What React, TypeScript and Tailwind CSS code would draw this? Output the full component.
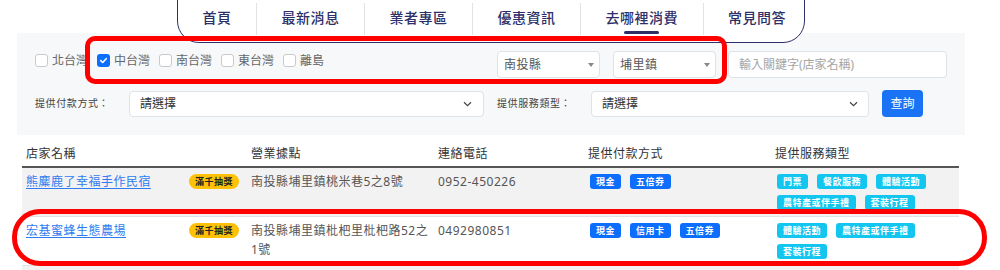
import { ReactNode } from "react";

const navItems = ["首頁", "最新消息", "業者專區", "優惠資訊", "去哪裡消費", "常見問答"];
const activeNav = "去哪裡消費";

const regions = [
  { label: "北台灣", checked: false },
  { label: "中台灣", checked: true },
  { label: "南台灣", checked: false },
  { label: "東台灣", checked: false },
  { label: "離島", checked: false },
];

const stores = [
  {
    name: "熊麋鹿了幸福手作民宿",
    addr: "南投縣埔里鎮桃米巷5之8號",
    phone: "0952-450226",
    pay: ["現金", "五倍券"],
    svc: ["門票", "餐飲服務", "體驗活動", "農特產或伴手禮", "套裝行程"],
  },
  {
    name: "宏基蜜蜂生態農場",
    addr: "南投縣埔里鎮枇杷里枇杷路52之1號",
    phone: "0492980851",
    pay: ["現金", "信用卡", "五倍券"],
    svc: ["體驗活動", "農特產或伴手禮", "套裝行程"],
  },
];

function Checkbox({ checked }: { checked: boolean }) {
  if (checked) {
    return (
      <span className="w-[13px] h-[13px] rounded-[3px] bg-[#0d6efd] flex items-center justify-center">
        <svg width="9" height="9" viewBox="0 0 10 10">
          <path d="M2 5.2 4.1 7.2 8 3" fill="none" stroke="white" strokeWidth="1.8" strokeLinecap="round" strokeLinejoin="round" />
        </svg>
      </span>
    );
  }
  return <span className="w-[13px] h-[13px] rounded-[3px] border border-[#c9c9c9] bg-white" />;
}

function Caret() {
  return (
    <svg width="6" height="4" viewBox="0 0 6 4">
      <path d="M0 0h6L3 4z" fill="#888" />
    </svg>
  );
}

function Chevron() {
  return (
    <svg width="9" height="6" viewBox="0 0 9 6">
      <path d="M1 1.2 4.5 4.6 8 1.2" fill="none" stroke="#444" strokeWidth="1.2" />
    </svg>
  );
}

function Badge({ children, color }: { children: ReactNode; color: string }) {
  return (
    <span className={`h-[15px] px-[6px] flex items-center text-[9px] leading-none font-bold text-white rounded-[3px] whitespace-nowrap ${color}`}>
      {children}
    </span>
  );
}

function App() {
  return (
    <div className="relative w-[1000px] h-[270px] overflow-hidden bg-white font-['Noto_Sans','Noto_Sans_CJK_TC',sans-serif]">
      {/* top navigation */}
      <nav className="relative z-10 ml-[177px] w-[628px] h-[46px] -mt-[3px] bg-white border-[1.5px] border-[#2c2f6a] rounded-b-[22px] flex">
        <div className="flex mt-[5px] h-[32px]">
          {navItems.map((item, i) => (
            <div
              key={item}
              className={`shrink-0 flex flex-col items-center px-[24.5px] ${i > 0 ? "border-l border-[#e3e3e3]" : ""}`}
            >
              <span className="whitespace-nowrap pt-[5px] leading-[20px] text-[14px] tracking-[0.5px] font-medium text-[#2d3068]">
                {item}
              </span>
              {item === activeNav && <span className="mt-[3px] w-[35px] h-[3px] rounded-full bg-[#2d3068]" />}
            </div>
          ))}
        </div>
      </nav>

      {/* filter panel */}
      <div className="-mt-[10px] ml-[17px] w-[948px] bg-[#f7f8fa] pt-[18px] pb-[18px]">
        <div className="flex items-start">
          <div className="w-[480px] pl-[18px] h-[19px] flex items-center">
            {regions.map((r) => (
              <label key={r.label} className="flex items-center gap-[4px] mr-[9px] text-[12px] leading-[16px] text-[#666]">
                <Checkbox checked={r.checked} />
                <span>{r.label}</span>
              </label>
            ))}
          </div>
          <div className="w-[103px] h-[27px] bg-white border border-[#dfe2e6] rounded-[4px] flex items-center justify-between pl-[6px] pr-[5px] text-[12px] text-[#555] tracking-[0.5px]">
            <span>南投縣</span>
            <Caret />
          </div>
          <div className="ml-[13px] w-[103px] h-[27px] bg-white border border-[#dfe2e6] rounded-[4px] flex items-center justify-between pl-[6px] pr-[5px] text-[12px] text-[#555] tracking-[0.5px]">
            <span>埔里鎮</span>
            <Caret />
          </div>
          <div className="ml-[12px] w-[219px] h-[27px] bg-white border border-[#dfe2e6] rounded-[4px] flex items-center pl-[10px] text-[12px] text-[#a5a5a5]">
            輸入關鍵字(店家名稱)
          </div>
        </div>

        <div className="flex items-center mt-[12px] h-[27px] pl-[18px]">
          <span className="w-[94px] text-[10px] tracking-[0.6px] text-[#444]">提供付款方式：</span>
          <div className="w-[355px] h-[26px] bg-white border border-[#dfe2e6] rounded-[4px] flex items-center justify-between pl-[10px] pr-[11px] text-[12px] text-[#333]">
            <span>請選擇</span>
            <Chevron />
          </div>
          <span className="ml-[13px] w-[94px] text-[10px] tracking-[0.6px] text-[#444]">提供服務類型：</span>
          <div className="w-[278px] h-[26px] bg-white border border-[#dfe2e6] rounded-[4px] flex items-center justify-between pl-[10px] pr-[10px] text-[12px] text-[#333]">
            <span>請選擇</span>
            <Chevron />
          </div>
          <button className="ml-[13px] w-[41px] h-[27px] rounded-[4px] bg-[#1a73f5] text-white text-[12px]">查詢</button>
        </div>
      </div>

      {/* result table */}
      <div className="mt-[5px] ml-[22px] w-[937px] text-[12px] tracking-[0.5px]">
        <div className="grid grid-cols-[225px_187px_150px_187px_188px] border-b-2 border-[#555] text-[#333] leading-[16px] pt-[6px] pb-[4px]">
          <div className="pl-[4px]">店家名稱</div>
          <div className="pl-[4px]">營業據點</div>
          <div className="pl-[4px]">連絡電話</div>
          <div className="pl-[4px]">提供付款方式</div>
          <div className="pl-[4px]">提供服務類型</div>
        </div>
        {stores.map((s, i) => (
          <div
            key={s.name}
            className={`grid grid-cols-[225px_187px_150px_187px_188px] border-b border-[#dee2e6] pb-[6px] ${i % 2 === 0 ? "bg-[#f2f2f2]" : "bg-white"}`}
          >
            <div className="flex justify-between items-start pl-[4px] pr-[8px]">
              <a href="#" className="pt-[4px] leading-[19px] text-[#2f7bf0] underline underline-offset-2">
                {s.name}
              </a>
              <span className="mt-[6px] h-[15px] px-[6px] flex items-center rounded-full bg-[#ffc107] text-[9px] leading-none font-bold text-[#222]">
                滿千抽獎
              </span>
            </div>
            <div className="pl-[4px] pr-[3px] pt-[4px] leading-[19px] text-[#555]">{s.addr}</div>
            <div className="pl-[4px] pt-[4px] leading-[19px] text-[#555]">{s.phone}</div>
            <div className="pl-[6px] pt-[6px] flex flex-wrap content-start gap-x-[9px] gap-y-[6px]">
              {s.pay.map((p) => (
                <Badge key={p} color="bg-[#0d6efd]">
                  {p}
                </Badge>
              ))}
            </div>
            <div className="pl-[6px] pt-[6px] flex flex-wrap content-start gap-x-[9px] gap-y-[6px]">
              {s.svc.map((p) => (
                <Badge key={p} color="bg-[#13c6ef]">
                  {p}
                </Badge>
              ))}
            </div>
          </div>
        ))}
        <div className="h-[40px] bg-[#f2f2f2]" />
      </div>

      {/* red annotation marks */}
      <div className="absolute z-20 left-[85px] top-[36px] w-[642px] h-[48px] border-[5px] border-[#ff0000] rounded-[10px]" />
      <div className="absolute z-20 left-[12px] top-[209px] w-[975px] h-[57px] border-[5px] border-[#ff0000] rounded-[28px]" />
    </div>
  );
}

export default App;
